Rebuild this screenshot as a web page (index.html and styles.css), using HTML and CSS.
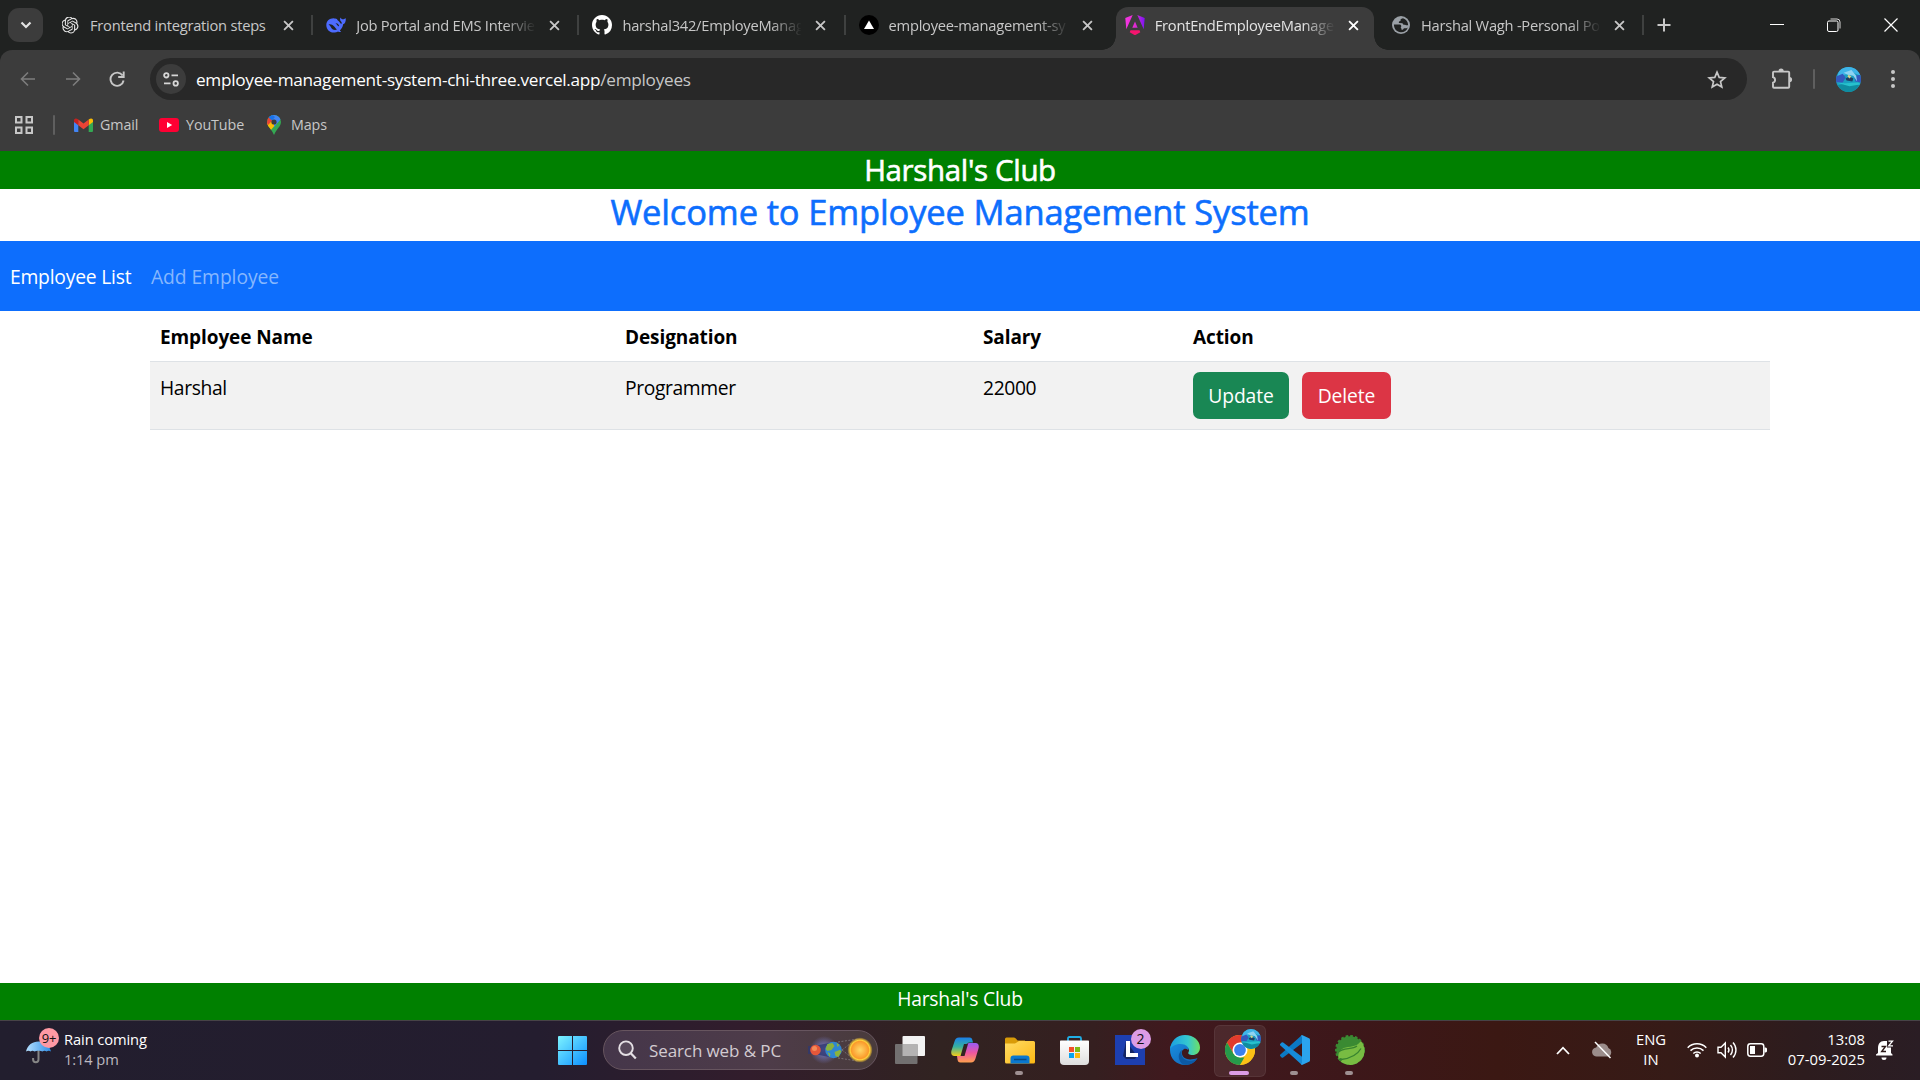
FILE: index.html
```html
<!DOCTYPE html>
<html lang="en">
<head>
<meta charset="utf-8">
<title>FrontEndEmployeeManagement</title>
<link rel="stylesheet" href="styles.css">
</head>
<body>
<svg class="defs" width="0" height="0" aria-hidden="true">
  <defs>
    <symbol id="x" viewBox="0 0 12 12"><path d="M1.2 1.2l9.6 9.6M10.8 1.2l-9.6 9.6" fill="none" stroke="currentColor" stroke-width="2"/></symbol>
    <symbol id="avatar" viewBox="0 0 26 26">
      <clipPath id="round"><circle cx="13" cy="13" r="13"/></clipPath>
      <g clip-path="url(#round)">
        <path fill="#1a9fc0" d="M0 0h26v26H0z"/>
        <path fill="#3fb4e8" d="M4 0h18l4 9-8-3-9 2-8 4z"/>
        <path fill="#3558bd" d="M0 10l7-3 3 4-3 5H0zM19 9l7-1v8l-6-1z"/>
        <path fill="#8fd3f2" d="M8 6l8-3 5 6 1 6-4-6-6-1z"/>
        <path fill="#1d3f66" d="M10 12l4-2 4 2-1 3-6-1z"/>
        <path fill="#d6d38a" d="M13 8l3 2-2 2-2-2z"/>
        <path fill="#0f8ca0" d="M2 19l9-2 13 2-4 7H6z"/>
        <path fill="#27c1cd" d="M0 16l9 1 14-1 3 2-12 2z"/>
      </g>
    </symbol>
    <linearGradient id="win" x1="0" y1="0" x2="1" y2="1"><stop stop-color="#7df3ff"/><stop offset="1" stop-color="#0c8fff"/></linearGradient>
    <linearGradient id="ng" x1="0" y1="0" x2="1" y2="0"><stop stop-color="#f637e3"/><stop offset=".5" stop-color="#e12bd0"/><stop offset="1" stop-color="#7a14f5"/></linearGradient>
    <linearGradient id="cpA" x1="0" y1="0" x2="0" y2="1"><stop stop-color="#1b7fe8"/><stop offset=".5" stop-color="#36b1a0"/><stop offset="1" stop-color="#f6cc18"/></linearGradient>
    <linearGradient id="cpB" x1="0" y1="0" x2="0" y2="1"><stop stop-color="#9a5cf5"/><stop offset=".5" stop-color="#ee55a0"/><stop offset="1" stop-color="#ffa04d"/></linearGradient>
    <linearGradient id="folder" x1="0" y1="0" x2="1" y2="1"><stop stop-color="#ffdc66"/><stop offset="1" stop-color="#fdb813"/></linearGradient>
    <linearGradient id="store" x1="0" y1="0" x2="0" y2="1"><stop stop-color="#fff"/><stop offset="1" stop-color="#dedede"/></linearGradient>
    <linearGradient id="edgeA" x1="0" y1="0" x2="1" y2="0"><stop stop-color="#1b9fe0"/><stop offset=".6" stop-color="#35c8d0"/><stop offset="1" stop-color="#6ee063"/></linearGradient>
    <linearGradient id="edgeB" x1="0" y1="0" x2="1" y2="1"><stop stop-color="#188fe0"/><stop offset="1" stop-color="#1262b5"/></linearGradient>
    <linearGradient id="umb" x1="0" y1="0" x2="1" y2="0"><stop stop-color="#b5e0ff"/><stop offset="1" stop-color="#2f8de6"/></linearGradient>
    <radialGradient id="sun"><stop stop-color="#ffd968"/><stop offset=".7" stop-color="#fb9a2b"/><stop offset=".8" stop-color="#ffd23c"/><stop offset="1" stop-color="#f7c52a" stop-opacity=".2"/></radialGradient>
    <radialGradient id="glow"><stop stop-color="#7a83d8"/><stop offset="1" stop-color="#7a83d8" stop-opacity="0"/></radialGradient>
  </defs>
</svg>

<header class="browser">
  <div class="tabstrip">
    <button class="tab-search"><svg width="12" height="8" viewBox="0 0 12 8"><path d="M1.500 1.500L6 6l4.500-4.500" fill="none" stroke="#e3e3e3" stroke-width="2.200"/></svg></button>
    <div class="tab">
      <svg class="fav gpt" viewBox="0 0 24 24"><path fill="#e6e6e6" d="M22.2819 9.8211a5.9847 5.9847 0 0 0-.5157-4.9108 6.0462 6.0462 0 0 0-6.5098-2.9A6.0651 6.0651 0 0 0 4.9807 4.1818a5.9847 5.9847 0 0 0-3.9977 2.9 6.0462 6.0462 0 0 0 .7427 7.0966 5.98 5.98 0 0 0 .511 4.9107 6.051 6.051 0 0 0 6.5146 2.9001A5.9847 5.9847 0 0 0 13.2599 24a6.0557 6.0557 0 0 0 5.7718-4.2058 5.9894 5.9894 0 0 0 3.9977-2.9001 6.0557 6.0557 0 0 0-.7475-7.0729zm-9.022 12.6081a4.4755 4.4755 0 0 1-2.8764-1.0408l.1419-.0804 4.7783-2.7582a.7948.7948 0 0 0 .3927-.6813v-6.7369l2.02 1.1686a.071.071 0 0 1 .038.052v5.5826a4.504 4.504 0 0 1-4.4945 4.4944zm-9.6607-4.1254a4.4708 4.4708 0 0 1-.5346-3.0137l.142.0852 4.783 2.7582a.7712.7712 0 0 0 .7806 0l5.8428-3.3685v2.3324a.0804.0804 0 0 1-.0332.0615L9.74 19.9502a4.4992 4.4992 0 0 1-6.1408-1.6464zM2.3408 7.8956a4.485 4.485 0 0 1 2.3655-1.9728V11.6a.7664.7664 0 0 0 .3879.6765l5.8144 3.3543-2.0201 1.1685a.0757.0757 0 0 1-.071 0l-4.8303-2.7865A4.504 4.504 0 0 1 2.3408 7.872zm16.5963 3.8558L13.1038 8.364 15.1192 7.2a.0757.0757 0 0 1 .071 0l4.8303 2.7913a4.4944 4.4944 0 0 1-.6765 8.1042v-5.6772a.79.79 0 0 0-.407-.667zm2.0107-3.0231l-.142-.0852-4.7735-2.7818a.7759.7759 0 0 0-.7854 0L9.409 9.2297V6.8974a.0662.0662 0 0 1 .0284-.0615l4.8303-2.7866a4.4992 4.4992 0 0 1 6.6802 4.66zM8.3065 12.863l-2.02-1.1638a.0804.0804 0 0 1-.038-.0567V6.0742a4.4992 4.4992 0 0 1 7.3757-3.4537l-.142.0805L8.704 5.459a.7948.7948 0 0 0-.3927.6813zm1.0976-2.3654l2.602-1.4998 2.6069 1.4998v2.9994l-2.5974 1.4997-2.6067-1.4997Z"/></svg>
      <span class="tab-title">Frontend integration steps</span><svg class="close"><use href="#x"/></svg>
    </div>
    <div class="tab">
      <svg class="fav" viewBox="0 0 20 20"><path fill="#4d6bfe" d="M19.800 3.200c-.9.200-1.500 1-2.700 1.100-1.300.1-1.800-.9-3-1.800.2 1.500-.3 2.400.5 3.400.6.700 1.200 1.100 1.100 2-.1.400-.4.900-.6 1.200C14 7 11.500 5.600 10.900 4c-1-.6-2.400-.4-3.400-.7C3.700 3.400.3 5.900.3 10c0 4.500 3.300 7.700 7.500 7.600 1.700 0 3-.4 4.200-1.100.9.500 2.200.8 3.200.4-.3-.7-1-1-1.400-1.500 2-1.800 3.100-3.900 3.300-6.100 1.700-.3 2.900-2.400 2.700-6.100z"/><path fill="#202221" d="M2.500 9.300c2.700-.5 4.700.5 6.200 2.800.8 1.300 1.500 2 2.300 2.500-2.500 1-4.700-.2-5.500-1.300-.6-1.200-1.500-2.700-3-4zM9.500 8.300c1.900-.2 3.300 1 3.600 2.700l-.9.200c-.8-.9-1.500-1.700-2.700-2.900z"/></svg>
      <span class="tab-title fade">Job Portal and EMS Intervie</span><svg class="close"><use href="#x"/></svg>
    </div>
    <div class="tab">
      <svg class="fav" viewBox="0 0 16 16"><path fill="#fff" d="M8 0C3.580 0 0 3.580 0 8c0 3.540 2.290 6.530 5.470 7.590.4.070.55-.17.55-.38 0-.19-.01-.82-.01-1.490-2.010.37-2.530-.49-2.690-.94-.09-.23-.48-.94-.82-1.130-.28-.15-.68-.52-.01-.53.63-.01 1.080.58 1.230.82.72 1.210 1.870.87 2.330.66.07-.52.28-.87.51-1.070-1.780-.2-3.640-.89-3.640-3.950 0-.87.31-1.590.82-2.150-.08-.2-.36-1.020.08-2.120 0 0 .67-.21 2.200.82.64-.18 1.320-.27 2-.27s1.360.09 2 .27c1.530-1.040 2.200-.82 2.200-.82.44 1.100.16 1.920.08 2.120.51.56.82 1.270.82 2.150 0 3.070-1.870 3.750-3.650 3.950.29.25.54.73.54 1.480 0 1.070-.01 1.930-.01 2.200 0 .21.15.46.55.38A8.010 8.010 0 0 0 16 8c0-4.420-3.580-8-8-8z"/></svg>
      <span class="tab-title fade">harshal342/EmployeManag</span><svg class="close"><use href="#x"/></svg>
    </div>
    <div class="tab no-sep">
      <svg class="fav" viewBox="0 0 20 20"><circle cx="10" cy="10" r="10"/><path fill="#fff" d="M10 5.500l5 8.500H5z"/></svg>
      <span class="tab-title fade">employee-management-sy</span><svg class="close"><use href="#x"/></svg>
    </div>
    <div class="tab active no-sep">
      <svg class="fav" viewBox="0 0 20 20"><path fill="url(#ng)" d="M7.700 0L.3 3.100l1 11.200zM12.300 0l7.400 3.100-1 11.200zM10 6.500l2.700 6.300H7.300z"/><path fill="#f5146e" d="M5.500 15.300h9l.8 2L10 20.300l-5.300-3z"/></svg>
      <span class="tab-title fade">FrontEndEmployeeManage</span><svg class="close"><use href="#x"/></svg>
    </div>
    <div class="tab">
      <svg class="fav" viewBox="0 0 20 20"><circle cx="10" cy="10" r="9" fill="#9aa0a6"/><path fill="#202221" d="M2.900 9.500h5.300c2.300 0 2.600 2.300 1.300 3 .8.500 1 .9.800 2l1.700.2c.3-1.300 1.400-1.700 2.900-1.500.8.100 1.600-.3 2-1-1 3.300-3.600 5-6.900 5-4.500 0-7-3.500-7.100-7.700zM12 3.200c-2.500.5-2.700 1.500-2.400 2.700-1.400 0-2.200.8-1.600 2.200l3.500.1c.5 1 1 1.500 2 1.500s1.300.9 3.700.6C17 6.600 15 4 12 3.200z"/></svg>
      <span class="tab-title fade">Harshal Wagh -Personal Po</span><svg class="close"><use href="#x"/></svg>
    </div>
    <svg class="new-tab" width="14" height="14" viewBox="0 0 14 14"><path d="M7 .5v13M.5 7h13" stroke="#c7c7c7" stroke-width="2"/></svg>
    <div class="window-controls">
      <svg width="14" height="14" viewBox="0 0 14 14"><path d="M0 6.500h14" stroke="#fff"/></svg>
      <svg width="14" height="14" viewBox="0 0 14 14"><path d="M3.500 1h6.500a3 3 0 0 1 3 3v6.500" fill="none" stroke="#d8d8d8"/><rect x=".5" y="3" width="10.500" height="10.500" rx="1.500" fill="none" stroke="#fff"/></svg>
      <svg width="14" height="14" viewBox="0 0 14 14"><path d="M.5.500l13 13M13.500.500l-13 13" stroke="#fff" stroke-width="1.200"/></svg>
    </div>
  </div>

  <div class="toolbar">
    <svg class="nav-btn dim" viewBox="0 0 16 16"><path d="M15 8H2M8 1.500L1.500 8 8 14.500"/></svg>
    <svg class="nav-btn dim" viewBox="0 0 16 16"><path d="M1 8h13M8 1.500L14.500 8 8 14.500"/></svg>
    <svg class="nav-btn" viewBox="0 0 16 16"><path d="M13.600 4.500A6.600 6.600 0 1 0 14.600 9.500M14.700.5V6H9.200"/></svg>
    <div class="omnibox">
      <span class="site-info"><svg width="16" height="15" viewBox="0 0 16 15"><g fill="none" stroke="#d6d6d6" stroke-width="1.800"><circle cx="3.300" cy="3.300" r="2.200"/><path d="M8.500 3.300H15M1 11.400h6.500"/><circle cx="12.700" cy="11.400" r="2.200"/></g></svg></span>
      <span class="url">employee-management-system-chi-three.vercel.app<span class="path">/employees</span></span>
      <svg class="star" width="20" height="19" viewBox="0 0 20 19"><path d="M10 2.200l2.200 5.200 5.600.5-4.300 3.700 1.300 5.500L10 14.200l-4.800 2.900 1.300-5.500L2.200 7.900l5.600-.5z" fill="none" stroke="#c7c7c7" stroke-width="1.700"/></svg>
    </div>
    <svg class="puzzle" width="22" height="22" viewBox="0 0 22 22"><path d="M3 3.600h14.200c.6 0 1 .4 1 1v14.200c0 .6-.4 1-1 1H3c-.6 0-1-.4-1-1v-4.200a2.800 2.800 0 0 0 0-5.400V4.600c0-.6.4-1 1-1z" fill="none" stroke="#c7c7c7" stroke-width="1.900"/><path d="M7.500 3.200a2.600 2.600 0 0 1 5.200 0zM18.500 9a2.600 2.600 0 0 1 0 5.200z" fill="#c7c7c7"/></svg>
    <span class="bar"></span>
    <svg class="profile" width="25" height="25"><use href="#avatar"/></svg>
    <svg class="kebab" width="4" height="18" viewBox="0 0 4 18"><g fill="#c7c7c7"><circle cx="2" cy="2" r="2"/><circle cx="2" cy="9" r="2"/><circle cx="2" cy="16" r="2"/></g></svg>
  </div>

  <div class="bookmarks">
    <svg width="18" height="18" viewBox="0 0 18 18"><path d="M1 1h5.500v5.500H1zM11.500 1H17v5.500h-5.500zM1 11.500h5.500V17H1zM11.500 11.500H17V17h-5.500z" fill="none" stroke="#c7c7c7" stroke-width="2"/></svg>
    <span class="bar"></span>
    <svg class="gmail" width="19" height="14" viewBox="0 0 19 14"><path fill="#4285f4" d="M0 3l4.300 3v8H1.300C.5 14 0 13.500 0 12.700z"/><path fill="#34a853" d="M14.700 6L19 3v9.700c0 .8-.5 1.300-1.300 1.300h-3z"/><path fill="#fbbc04" d="M14.700 1.600C17-.6 19 .5 19 2.500V4l-4.300 3.300z"/><path fill="#c5221f" d="M0 4V2.500C0 .5 2-.6 4.300 1.600v5.700z"/><path fill="#ea4335" d="M4.300 1.600l5.200 4 5.200-4v5.700l-5.200 4-5.200-4z"/></svg>
    <span class="bm-gmail">Gmail</span>
    <svg class="yt" width="20" height="14" viewBox="0 0 20 14"><rect width="20" height="14" rx="3" fill="#ff0033"/><path fill="#fff" d="M8 4l5.200 3L8 10z"/></svg>
    <span class="bm-yt">YouTube</span>
    <svg class="maps" width="14" height="20" viewBox="0 0 14 20"><clipPath id="pin"><path d="M7 0a7 7 0 0 1 7 7c0 3-2 5-3.500 7S7.800 18 7 20c-.8-2-2-4-3.500-6S0 10 0 7a7 7 0 0 1 7-7z"/></clipPath><g clip-path="url(#pin)"><path fill="#34a853" d="M0 0h14v20H0z"/><path fill="#fbbc04" d="M0 8l4-2 6 2-7 8H0z"/><path fill="#ea4335" d="M0 2l2-1 4 4-5 5H0z"/><path fill="#4285f4" d="M1.500 2L4-1h7l3 5-7 8V7z"/><path fill="#1a73e8" d="M1.500 2.500L4-1l4 3-3 3.500z"/></g><circle cx="7" cy="7" r="2.600" fill="#3c3c3c"/></svg>
    <span class="bm-maps">Maps</span>
  </div>
</header>

<main class="page">
  <h3 class="club">Harshal's Club</h3>
  <h2 class="welcome">Welcome to Employee Management System</h2>
  <nav class="navbar"><a class="on">Employee List</a><a>Add Employee</a></nav>
  <table class="employees">
    <colgroup><col class="c-name"><col class="c-role"><col class="c-pay"><col></colgroup>
    <thead><tr><th>Employee Name</th><th>Designation</th><th>Salary</th><th>Action</th></tr></thead>
    <tbody><tr><td>Harshal</td><td>Programmer</td><td>22000</td><td class="actions"><div><button class="btn update">Update</button><button class="btn delete">Delete</button></div></td></tr></tbody>
  </table>
  <footer class="foot">Harshal's Club</footer>
</main>

<div class="taskbar">
  <div class="weather">
    <div class="umbrella"><svg width="25" height="24" viewBox="0 0 25 24"><path d="M12.500 8v11.500a2.700 2.700 0 0 1-5.400 0V18" fill="none" stroke="#858585" stroke-width="2"/><path fill="url(#umb)" d="M0 11.500C1.500 5 6.500 1.500 12.500 1.500S23.500 5 25 11.500c-1.500-1-3.200-1-4.500 0-1.200-1-2.800-1-4 0-1.500-1-6.500-1-8 0-1.300-1-2.800-1-4 0-1.200-1-3-1-4.500 0z"/></svg><span class="badge nine">9+</span></div>
    <div class="weather-text"><div class="rain">Rain coming</div><div class="when">1:14 pm</div></div>
  </div>
  <div class="apps">
    <div class="slot"><svg width="29" height="29" viewBox="0 0 29 29"><path fill="url(#win)" d="M0 1a1 1 0 0 1 1-1h13v14H0zM15 0h13a1 1 0 0 1 1 1v13H15zM0 15h14v14H1a1 1 0 0 1-1-1zM15 15h14v13a1 1 0 0 1-1 1H15z"/></svg></div>
    <div class="search">
      <svg width="19" height="20" viewBox="0 0 19 20"><circle cx="8" cy="8.200" r="6.800" fill="#ffffff18" stroke="#e4dfe4" stroke-width="1.900"/><path d="M12.800 13.200l5 5.300" stroke="#e4dfe4" stroke-width="2.200"/></svg>
      <span>Search web &amp; PC</span>
      <svg class="planets" width="68" height="30" viewBox="0 0 68 30"><circle cx="16" cy="15" r="14" fill="url(#glow)"/><path d="M0 11h6L26 7v16L6 19H0z" fill="#30386f" opacity=".8"/><path d="M30 7L50 4M30 23l20 3M34 15l9 7M34 15l9-7" stroke="#8c8589" stroke-dasharray="2 1.500" fill="none" stroke-width=".7"/><circle cx="7.500" cy="15" r="5.300" fill="#e4573a"/><circle cx="6.500" cy="13.500" r="2.500" fill="#f48b58"/><circle cx="25.500" cy="15" r="8.300" fill="#2f86d2"/><path fill="#8bb33d" d="M19.500 9l5-1 2 3-3 4-4 1-2-2zM26.500 17l5-2 2 1-3 6-3-1zM28.500 8l3 2-2 2zM19.500 17l3 2-1 3z"/><circle cx="52" cy="15" r="12.300" fill="url(#sun)"/></svg>
    </div>
    <div class="slot first"><svg width="30" height="28" viewBox="0 0 30 28"><rect x="7.500" width="22.500" height="20" rx="1" fill="#f3f3f3"/><rect y="8" width="22.500" height="20" rx="1" fill="#727070"/><path fill="#b4b3b3" d="M7.500 8h15v12h-15z"/></svg></div>
    <div class="slot"><svg width="28" height="26" viewBox="0 0 28 26"><path fill="url(#cpA)" d="M8 .5h10.500c2 0 2.600 1.200 3 3l.5 2h-3.500c-2 0-3 1-3.500 3l-2.300 8c-.5 1.500-1.500 2.500-3 2.500H3.500C.5 19-.3 16.500.5 13.500l3-9C4.300 2 5.500.5 8 .5z"/><path fill="url(#cpB)" d="M20 25.500H9.500c-2 0-2.600-1.200-3-3L6 19h3.500c2 0 3-1 3.500-3l2.300-7.500C16 6.700 17 6 18.500 6h6c3 0 3.800 2.500 3 5.500l-3 10c-.8 2.500-2 4-4.500 4z"/><path fill="#322222" d="M13 7h4l-3.500 12H9.500z"/></svg></div>
    <div class="slot run"><svg width="30" height="27" viewBox="0 0 30 27"><path fill="#d99b08" d="M0 2a1.500 1.500 0 0 1 1.500-1.500H9c2 0 2.500 3 4.500 3H20V10H0z"/><path fill="url(#folder)" d="M0 6.500h10l4-2.500h14.500A1.500 1.500 0 0 1 30 5.500V25a1.500 1.500 0 0 1-1.500 1.500h-27A1.500 1.500 0 0 1 0 25z"/><path fill="#0a78cf" d="M5.500 26.500v-5a3 3 0 0 1 3-3h13a3 3 0 0 1 3 3v5z"/><path d="M9 22.500h12.500" stroke="#094a83" stroke-width="1.500"/></svg></div>
    <div class="slot"><svg width="29" height="29" viewBox="0 0 29 29"><path d="M8 6V2.500C8 1.500 8.500 1 9.500 1h10c1 0 1.500.5 1.500 1.500V6" fill="none" stroke="#20aee5" stroke-width="1.800"/><path fill="url(#store)" d="M0 5.500c0-.6.400-1 1-1h27c.6 0 1 .4 1 1V25a4 4 0 0 1-4 4H4a4 4 0 0 1-4-4z"/><path fill="#f2502a" d="M9 11h5v5H9z"/><path fill="#7fba14" d="M15 11h5v5h-5z"/><path fill="#08a3ee" d="M9 17h5v5H9z"/><path fill="#fdb90d" d="M15 17h5v5h-5z"/></svg></div>
    <div class="slot"><div class="icon-l"><svg width="30" height="30" viewBox="0 0 30 30"><path fill="#1d3fb0" d="M0 0h30v30H0z"/><path fill="#142563" d="M11 6L8 21l3 3h9l2-3z"/><path fill="#fff" d="M11 6h4v12h8v4H11z"/></svg><span class="badge two">2</span></div></div>
    <div class="slot"><svg width="30" height="30" viewBox="0 0 30 30"><path fill="url(#edgeB)" d="M0 15C0 8 6 6 12 8c6 2 8 5 6 7-3-3-7 0-6 4 1 5 7 7 15.500 4C25 27.500 20 30 15 30 6.500 30 0 23.500 0 15z"/><path fill="#0c59a4" d="M12 15c-2 6 2 11 8 11 3 0 6-1 7.500-3C24 29 18 31 13 29.500c-5-3-6-11-1-14.500z"/><path fill="url(#edgeA)" d="M0 14.500C.5 6 7 0 15 0c9 0 15 6 15 12.500 0 5-3.500 7.500-7.500 7.500-3 0-5-1.300-4-2.700C20.500 14 17 9 10.500 9 5 9 1 11.500 0 14.500z"/></svg></div>
    <div class="slot current"><div class="chrome"><svg width="30" height="30" viewBox="0 0 30 30"><circle cx="15" cy="15" r="15" fill="#fbc116"/><path fill="#e23b2e" d="M2 7.500A15 15 0 0 1 28 7.500H15L8.500 18.800z"/><path fill="#269a4b" d="M2 7.500l6.500 11.200L15 22.500h6.500L15 30A15 15 0 0 1 2 7.500z"/><path fill="#fbc116" d="M28 7.500A15 15 0 0 1 15 30l6.500-11.200V7.500z"/><circle cx="15" cy="15" r="7.500" fill="#fff"/><circle cx="15" cy="15" r="5.900" fill="#3b80ee"/></svg><svg class="mini" width="20" height="20"><use href="#avatar"/></svg></div></div>
    <div class="slot run"><svg width="30" height="30" viewBox="0 0 30 30"><path fill="#0b79c4" d="M22 0v8.300L3.200 22.500a1.300 1.300 0 0 1-1.600 0L.4 21.300a1.200 1.200 0 0 1 0-1.800z"/><path fill="#168cd9" d="M22 30v-8.300L3.200 7.500a1.300 1.300 0 0 0-1.600 0L.4 8.700a1.200 1.200 0 0 0 0 1.800z"/><path fill="#2ba4ee" d="M22 0l7 3.200a1.700 1.700 0 0 1 1 1.500v20.600a1.700 1.700 0 0 1-1 1.500L22 30l-1.500-1.500c.9.500 1.500 0 1.500-1V2.500c0-1-.6-1.500-1.500-1z"/></svg></div>
    <div class="slot run"><svg width="30" height="30" viewBox="0 0 30 30"><circle cx="15" cy="15" r="13.700" fill="#3a8a32" stroke="#3a8a32" stroke-width="2.600" stroke-dasharray="2.600 2"/><path fill="#78bc42" d="M26 6c4 5 5 12 1 18a15 15 0 0 1-23 1C2 18 5 13 13 12c7-.8 10-2 13-6z"/><path d="M4 17c4-5 13-2 18-6" fill="none" stroke="#37832f" stroke-width="1.200"/><path d="M6 24.500c9-1 16-4 20-11" fill="none" stroke="#37832f" stroke-width="1.300"/><circle cx="5.500" cy="24.500" r="1.600" fill="#37832f"/></svg></div>
  </div>
  <div class="tray">
    <svg class="chev" width="14" height="9" viewBox="0 0 14 9"><path d="M1 8l6-6.300L13 8" fill="none" stroke="#fff" stroke-width="1.800"/></svg>
    <svg class="cloud" width="21" height="18" viewBox="0 0 21 18"><path fill="#9b8d8b" d="M5 15.500a4.500 4.500 0 0 1-.8-9 6.500 6.500 0 0 1 12.200.5 4.500 4.500 0 0 1-.4 8.500z"/><path d="M3 1l15.500 16" stroke="#fff" stroke-width="1.500"/></svg>
    <div class="lang"><div>ENG</div><div>IN</div></div>
    <svg class="wifi" width="20" height="16" viewBox="0 0 20 16"><g fill="none" stroke="#fff" stroke-width="1.500"><path d="M.7 5.700a13 13 0 0 1 18.600 0M3.500 8.600a9.200 9.200 0 0 1 13 0M6.300 11.500a5.300 5.300 0 0 1 7.400 0"/></g><circle cx="10" cy="13.500" r="2" fill="#fff"/></svg>
    <svg class="vol" width="21" height="18" viewBox="0 0 21 18"><g fill="none" stroke="#fff" stroke-width="1.400"><path d="M1 6.300h3L8.300 2v14L4 11.700H1z"/><path d="M11 6.500a4 4 0 0 1 0 5M13.500 4a7.500 7.500 0 0 1 0 10M16 1.500a11 11 0 0 1 0 15"/></g></svg>
    <svg class="batt" width="20" height="14" viewBox="0 0 20 14"><rect x=".8" y=".8" width="16" height="12.400" rx="2.600" fill="none" stroke="#fff" stroke-width="1.500"/><path fill="#fff" d="M3 3h5v8H3zM17.500 4.500h1c1 0 1.500.8 1.500 1.500v2c0 .7-.5 1.500-1.500 1.500h-1z"/></svg>
    <div class="clock"><div class="time">13:08</div><div class="date">07-09-2025</div></div>
    <svg class="bell" width="18" height="20" viewBox="0 0 18 20"><path fill="#fff" d="M2 8c0-4 2-7 6-7h3v6.500h4V13l1.500 1.500v1H0v-1L2 13zM5.500 17.500h5a2.500 2.500 0 0 1-5 0z"/><path d="M12.500 1.200h4l-3.800 4.600h4.300" fill="none" stroke="#fff" stroke-width="1.300"/><path d="M5.500 6.500h4L5.700 11.500H10" fill="none" stroke="#2d1a19" stroke-width="1.400"/></svg>
  </div>
</div>
</body>
</html>
```
FILE: styles.css
```css
* { box-sizing: border-box; }
html, body { margin: 0; height: 100%; }
body {
  display: flex; flex-direction: column; width: 1920px; height: 1080px; overflow: hidden;
  font-family: "Open Sans", "Noto Sans", sans-serif; background: #fff;
}
svg { display: block; flex: none; }
.defs { position: absolute; }
button { font: inherit; letter-spacing: inherit; border: 0; padding: 0; }
.bar { flex: none; width: 2px; height: 20px; background: #5f5f5f; border-radius: 1px; }

/* browser window */
.browser { flex: none; height: 151px; background: #202221; display: flex; flex-direction: column; }
.tabstrip { display: flex; align-items: center; height: 50px; padding-left: 8px; }
.tab-search { flex: none; width: 35px; height: 34px; border-radius: 11px; background: #3c3c3c; display: grid; place-items: center; margin-right: 4px; }
.tab {
  position: relative; flex: none; width: 266.200px; height: 50px; padding: 0 17px 0 13px;
  display: flex; align-items: center; color: #c7c7c7; font-size: 14.700px; letter-spacing: -.25px;
}
.tab::after { content: ""; position: absolute; right: 0; top: 15px; width: 2px; height: 20px; background: #3f4140; }
.tab.no-sep::after { display: none; }
.fav { width: 20px; height: 20px; }
.gpt { padding: 1.500px; }
.tab-title { flex: none; width: 179px; margin: 0 14px 0 10px; line-height: 24px; white-space: nowrap; }
.fade { -webkit-mask-image: linear-gradient(90deg, #000 148px, transparent 180px); mask-image: linear-gradient(90deg, #000 148px, transparent 180px); }
.close { width: 11px; height: 11px; color: #c7c7c7; overflow: visible; }
.tab.active { color: #e3e3e3; z-index: 1; }
.active .close { color: #fff; }
.tab.active::before {
  content: ""; position: absolute; z-index: -1; left: 4px; right: 4px; top: 7px; bottom: 0;
  background: #3c3c3c; border-radius: 12px 12px 0 0;
}
.tab.active.no-sep::after {
  content: ""; display: block; position: absolute; z-index: -1; left: -10px; right: -10px; top: auto; bottom: 0; width: auto; height: 14px;
  background:
    radial-gradient(circle at 0 0, transparent 13.500px, #3c3c3c 14px) left / 14px 14px no-repeat,
    radial-gradient(circle at 100% 0, transparent 13.500px, #3c3c3c 14px) right / 14px 14px no-repeat;
}
.new-tab { margin-left: 13px; }
.window-controls { display: flex; gap: 43px; margin-left: 99px; }

.toolbar { display: flex; align-items: center; height: 58px; background: #3c3c3c; border-radius: 12px 12px 0 0; padding-left: 20px; flex: none; }
.nav-btn { width: 16px; height: 16px; margin-right: 28.500px; fill: none; stroke: #c7c7c7; stroke-width: 1.900; }
.nav-btn.dim { stroke: #7d7d7d; stroke-width: 1.600; }
.omnibox { flex: none; display: flex; align-items: center; width: 1597px; height: 42px; margin-left: -3.500px; padding: 0 20px 0 6px; border-radius: 21px; background: #282828; }
.site-info { display: grid; place-items: center; width: 30px; height: 30px; border-radius: 50%; background: #3c3c3c; }
.url { flex: 1; margin-left: 10px; padding-top: 1px; color: #fff; font-size: 17.200px; letter-spacing: -.28px; line-height: 26px; white-space: nowrap; }
.path { color: #c7c7c7; }
.puzzle { margin-left: 24px; }
.toolbar .bar { margin: 0 21px 0 20px; }
.kebab { margin-left: 30px; }

.bookmarks { flex: 1; display: flex; align-items: center; padding: 0 0 9px 15px; background: #3c3c3c; color: #c7c7c7; font-size: 14.300px; letter-spacing: -.1px; line-height: 24px; }
.bookmarks .bar { margin: 0 19px 0 20px; }
.bookmarks span:not(.bar) { white-space: nowrap; margin-top: -1px; }
.bm-gmail { width: 59px; margin-left: 7px; }
.bm-yt { width: 80px; margin-left: 7px; }
.maps { margin: 0 10px 0 1px; }

/* page */
.page { flex: 1; display: flex; flex-direction: column; min-height: 0; font-size: 19.300px; letter-spacing: -.2px; }
h2, h3 { margin: 0; font-weight: 500; text-align: center; -webkit-text-stroke: .6px currentColor; }
.club { height: 38px; background: #008000; color: #fff; font-size: 29.500px; line-height: 38px; letter-spacing: -.35px; }
.welcome { height: 52px; color: #0d6efd; font-size: 34.500px; line-height: 45px; letter-spacing: -.15px; }
.navbar { height: 70px; display: flex; align-items: center; gap: 19px; padding: 1px 10px 0; background: #0d6efd; color: #86b7fe; white-space: nowrap; }
.navbar a { letter-spacing: -.08px; }
.navbar .on { color: #fff; width: 122px; letter-spacing: -.22px; }
.employees { width: 1620px; margin: 0 auto; border-collapse: collapse; table-layout: fixed; text-align: left; color: #000; line-height: 30px; }
.c-name { width: 465px; }
.c-role { width: 358px; }
.c-pay { width: 210px; }
th, td { padding: 11px 10px 9px; vertical-align: top; border-bottom: 1px solid #dee2e6; }
th { font-weight: 700; height: 50px; font-size: 19px; letter-spacing: -.1px; }
td { background: #f2f2f2; height: 68px; letter-spacing: -.38px; }
td.actions { padding: 10px; letter-spacing: -.1px; }
.actions div { display: flex; gap: 13px; }
.btn { height: 47px; border-radius: 7px; color: #fff; line-height: 47px; text-align: center; }
.update { width: 96px; background: #198754; }
.delete { width: 89px; background: #dc3545; }
.foot { margin-top: auto; height: 37px; background: #008000; color: #fff; text-align: center; line-height: 32px; }

/* taskbar */
.taskbar {
  flex: none; height: 60px; display: flex; align-items: center; border-top: 1px solid #474347; color: #fff; padding-left: 26px;
  background: linear-gradient(90deg, #221e2e 0, #241d2f 28%, #321d2c 39%, #312321 49%, #351f20 57%, #40191e 61%, #3d171a 70%, #3b1813 78%, #361b17 87%, #2d1c1e 94%, #2a1d24 100%);
}
.weather { display: flex; width: 519px; }
.umbrella, .icon-l, .chrome { position: relative; }
.umbrella { width: 25px; margin-right: 13px; padding-top: 9px; margin-top: -1px; }
.badge { position: absolute; width: 20px; height: 20px; border-radius: 50%; color: #111; font-size: 12px; line-height: 20px; text-align: center; }
.nine { left: 13px; top: -3px; background: #ff99a4; font-size: 13px; letter-spacing: -.3px; }
.two { left: 16px; top: -6px; background: #dc9ce5; font-size: 14px; }
.weather-text { font-size: 14.700px; letter-spacing: -.1px; line-height: 20px; margin-top: -3px; white-space: nowrap; }
.when { color: #bdb9c0; }
.apps { display: flex; align-items: center; margin-top: -1px; }
.slot { position: relative; flex: none; width: 55px; height: 59px; display: grid; place-items: center; }
.slot.first { margin-left: 4px; }
.search { width: 275px; height: 40px; margin-left: 3px; padding-left: 14px; display: flex; align-items: center; border: 1px solid #67555f; border-radius: 20px; background: linear-gradient(90deg, #45364a, #4e3c49 60%, #493b3c); color: #d3cbd1; font-size: 17px; letter-spacing: -.1px; }
.search span { width: 147px; margin: 0 12px; white-space: nowrap; }
.run::after, .current::after { content: ""; position: absolute; bottom: 5px; left: 23px; width: 8px; height: 4px; border-radius: 2px; background: #9f9092; }
.current::before { content: ""; position: absolute; left: 2px; top: 4px; width: 50px; height: 50px; border-radius: 6px; background: #ffffff12; border: 1px solid #ffffff10; }
.current::after { left: 17px; width: 20px; background: #dc9ce5; }
.mini { position: absolute; left: 16px; top: -6px; }
.tray { display: flex; align-items: center; margin-left: auto; margin-top: -1px; padding-right: 26px; font-size: 14.800px; line-height: 20px; }
.cloud { margin-left: 22px; }
.lang { width: 46px; margin: -2px 13px 0 15px; text-align: center; }
.vol { margin-left: 10px; }
.batt { margin-left: 9px; }
.clock { width: 98px; margin: -2px 11px 0 0; text-align: right; white-space: nowrap; }
```
